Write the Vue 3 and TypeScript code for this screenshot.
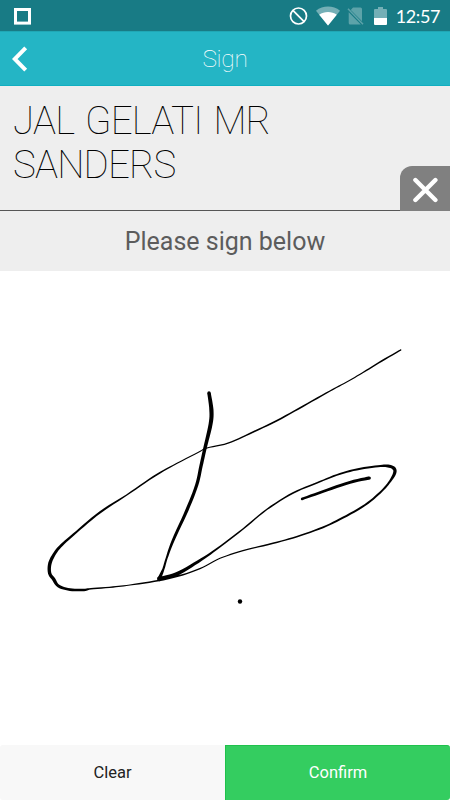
<script setup lang="ts">
type InkPoint = [x: number, y: number, width: number]

// Pen samples: position and pen width, in canvas coordinates.
const strokes: InkPoint[][] = [
  [
    [209, 393, 3.4], [211.4, 410, 4.2], [210.6, 424, 4], [205, 448, 3.4],
    [201, 466, 3.4], [196.7, 485, 3.2], [187, 510, 3.2], [173.3, 540, 2.8],
    [166.7, 558, 2], [163.4, 569, 2.2], [159.3, 578.5, 3.8],
  ],
  [
    [159.3, 579, 4.4], [176.7, 574, 3.8], [198, 561.7, 2.8], [216.7, 549, 1.8],
    [243, 529, 1.5], [266.7, 509.5, 1.5], [293, 493, 1.7], [316.7, 483, 1.4],
    [336.7, 475, 1.8], [356.7, 469.4, 2], [378, 466.2, 2], [388, 466, 2.8],
    [394, 468.5, 3.4], [394.5, 473.5, 3.2], [389, 482.7, 2.1], [380, 492.7, 2],
    [365, 505, 2], [343, 517.7, 2], [323, 527.3, 1.8], [296.7, 536.7, 1.5],
    [273, 543.3, 1.5], [243, 550.7, 1.2], [220, 558.3, 1.1], [203, 567.2, 1.2],
    [183, 574.7, 1.5], [159, 580.5, 1.6], [130, 585, 1.2], [113, 587, 1.3],
    [91, 588.8, 1.5], [84, 589.9, 2.5], [70, 589.6, 2.6], [58.5, 586, 3],
    [53.5, 579, 3.4], [49.6, 573, 3.3], [50, 563, 3.5], [55, 553, 3],
    [61.7, 545, 2.7], [76.7, 531.7, 2], [100, 512.3, 2.2], [126.7, 495, 1.5],
    [153, 477, 1.6], [173, 465.5, 1.3], [198, 452.5, 1], [207, 448, 1],
    [228, 443.2, 1.3], [250, 433.5, 1.5], [276.7, 420.7, 1.7], [303, 406.2, 1.6],
    [330, 391, 1.4], [346.7, 382, 1], [363, 372.5, 1.3], [381.7, 361, 1.5],
    [400.7, 350, 1.4],
  ],
  [[302, 499, 2.4], [323, 491.5, 2.8], [350, 482.3, 2.9], [369.3, 478, 3.2]],
]

function spline(a: number, b: number, c: number, d: number, t: number): number {
  return 0.5 * (2 * b + (c - a) * t + (2 * a - 5 * b + 4 * c - d) * t * t + (3 * b - a - 3 * c + d) * t * t * t)
}

function smooth(points: InkPoint[]): InkPoint[] {
  const out: InkPoint[] = []
  const steps = 6
  for (let i = 0; i < points.length - 1; i++) {
    const p0 = points[Math.max(0, i - 1)]
    const p1 = points[i]
    const p2 = points[i + 1]
    const p3 = points[Math.min(points.length - 1, i + 2)]
    for (let s = 0; s < steps; s++) {
      const t = s / steps
      out.push([
        spline(p0[0], p1[0], p2[0], p3[0], t),
        spline(p0[1], p1[1], p2[1], p3[1], t),
        p1[2] + (p2[2] - p1[2]) * t,
      ])
    }
  }
  out.push(points[points.length - 1])
  return out
}

// Turns a centre line with varying width into a closed ribbon.
function ribbon(points: InkPoint[]): string {
  const line = smooth(points)
  const left: string[] = []
  const right: string[] = []
  line.forEach(([x, y, w], i) => {
    const a = line[Math.max(0, i - 1)]
    const b = line[Math.min(line.length - 1, i + 1)]
    const len = Math.hypot(b[0] - a[0], b[1] - a[1]) || 1
    const nx = (-(b[1] - a[1]) / len) * (w / 2)
    const ny = ((b[0] - a[0]) / len) * (w / 2)
    left.push(`${(x + nx).toFixed(2)} ${(y + ny).toFixed(2)}`)
    right.unshift(`${(x - nx).toFixed(2)} ${(y - ny).toFixed(2)}`)
  })
  return `M${left.join('L')}L${right.join('L')}Z`
}

const ribbons = strokes.map(ribbon)
const caps = strokes.flatMap((s) => [s[0], s[s.length - 1]])
</script>

<template>
  <div class="screen">
    <div class="status">
      <svg class="notice" width="18" height="18" viewBox="0 0 18 18"><rect x="2.5" y="2.5" width="14" height="13.6" /></svg>
      <div class="indicators">
        <svg width="20" height="20" viewBox="0 0 20 20" class="blocked">
          <circle cx="9.5" cy="10" r="8" /><path d="M3.9 4.4 15.1 15.6" />
        </svg>
        <svg width="24" height="20" viewBox="0 0 24 20">
          <path class="dim" d="M0 4.8C6.8-.8 17.2-.8 24 4.8L12 19.5Z" />
          <path class="solid" d="M3.2 8.7C8.2 5 15.8 5 20.8 8.7L12 19.5Z" />
        </svg>
        <svg width="17" height="20" viewBox="0 0 17 20">
          <path class="faint" d="M6 1.5H13.5Q15 1.5 15 3V15.2L3.8 4Z M1.7 6.3 13.8 18.4H3.2Q1.7 18.4 1.7 16.9Z" />
          <path class="slash" d="M1 2.7 16 18.3" />
        </svg>
        <svg width="13" height="20" viewBox="0 0 13 20">
          <path class="dim" d="M4 1H9V3H12Q13 3 13 4V12H0V4Q0 3 1 3H4Z" />
          <path class="solid" d="M0 12H13V18Q13 19 12 19H1Q0 19 0 18Z" />
        </svg>
        <span class="clock">12:57</span>
      </div>
    </div>

    <header class="bar">
      <svg class="back" width="16" height="26" viewBox="0 0 16 26"><path d="M13.7 1.8 2.7 13 13.7 24.2" /></svg>
      <h1>Sign</h1>
    </header>

    <section class="recipient">
      <h2>JAL GELATI MR SANDERS</h2>
      <button class="close" aria-label="Close">
        <svg width="26" height="26" viewBox="0 0 26 26"><path d="M3.4 3 23.4 23M23.4 3 3.4 23" /></svg>
      </button>
    </section>

    <p class="prompt">Please sign below</p>

    <svg class="pad" viewBox="0 271 450 474">
      <path v-for="(d, i) in ribbons" :key="i" :d="d" fill-rule="nonzero" />
      <circle v-for="(c, i) in caps" :key="'c' + i" :cx="c[0]" :cy="c[1]" :r="c[2] / 2" />
      <circle cx="240" cy="601.5" r="2.2" />
    </svg>

    <footer class="actions">
      <button class="clear">Clear</button>
      <button class="confirm">Confirm</button>
    </footer>
  </div>
</template>

<style>
body {
  margin: 0;
  background: #fff;
}
</style>

<style scoped>
.screen {
  display: flex;
  flex-direction: column;
  width: 450px;
  height: 800px;
  overflow: hidden;
  background: #fff;
  font-family: Roboto, "Liberation Sans", sans-serif;
}
svg {
  display: block;
}
button {
  border: 0;
  padding: 0;
  font: inherit;
}
.status {
  display: flex;
  align-items: center;
  justify-content: space-between;
  box-sizing: border-box;
  height: 31px;
  padding: 0 10px 0 13px;
  background: #187b85;
}
.notice rect {
  fill: none;
  stroke: #fff;
  stroke-width: 3;
}
.indicators {
  display: flex;
  align-items: center;
}
.indicators svg {
  margin-right: 7px;
}
.indicators svg:nth-child(3) {
  margin-right: 10px;
}
.indicators svg:nth-child(4) {
  margin-right: 9px;
}
.blocked {
  fill: none;
  stroke: #fff;
  stroke-width: 1.7;
}
.dim {
  fill: #fff;
  opacity: 0.4;
}
.faint {
  fill: #fff;
  opacity: 0.3;
}
.solid {
  fill: #fff;
}
.slash {
  stroke: #5da2a9;
  stroke-width: 1.5;
}
.clock {
  color: #fff;
  font: 400 18px/22px Lato, sans-serif;
  letter-spacing: -0.4px;
}
.bar {
  display: grid;
  grid-template-columns: 60px 1fr 60px;
  align-items: center;
  box-sizing: border-box;
  height: 55px;
  border-top: 1px solid #20a7b5;
  border-bottom: 1px solid #10afc1;
  background: #24b5c5;
}
.back {
  margin-left: 12px;
}
.back path {
  fill: none;
  stroke: #fff;
  stroke-width: 4;
}
h1 {
  margin: 0;
  color: #fff;
  text-align: center;
  font-size: 24.5px;
  line-height: 30px;
  font-weight: 100;
  letter-spacing: -0.3px;
}
.recipient {
  display: flex;
  align-items: flex-end;
  justify-content: space-between;
  box-sizing: border-box;
  height: 125px;
  padding-left: 13px;
  border-bottom: 1px solid #555;
  background: #eee;
}
h2 {
  align-self: flex-start;
  width: 300px;
  margin: 13px 0 0;
  color: #000;
  font-size: 38.5px;
  line-height: 43.5px;
  font-weight: 100;
  letter-spacing: -0.8px;
  word-spacing: 2.5px;
}
.close {
  display: grid;
  place-items: center;
  box-sizing: border-box;
  width: 50px;
  height: 45px;
  margin-bottom: -1px;
  padding-top: 2px;
  border-radius: 12px 0 0;
  background: #808080;
}
.close path {
  fill: none;
  stroke: #fff;
  stroke-width: 4.4;
  stroke-linecap: round;
}
.prompt {
  box-sizing: border-box;
  height: 60px;
  margin: 0;
  padding-top: 1px;
  background: #eee;
  color: #5c5c5c;
  text-align: center;
  font-size: 25px;
  line-height: 60px;
}
.pad {
  width: 450px;
  height: 474px;
  fill: #000;
}
.actions {
  display: grid;
  grid-template-columns: 1fr 1fr;
  height: 55px;
}
.actions button {
  font-size: 16.5px;
  line-height: 54px;
}
.actions .clear {
  border-radius: 3px 0 0 3px;
  background: #f8f8f8;
  color: #222;
}
.actions .confirm {
  box-sizing: border-box;
  border: solid #1fc14c;
  border-width: 1px 0 0 1px;
  border-radius: 0 3px 3px 0;
  background: #34cd60;
  color: #fff;
}
</style>
